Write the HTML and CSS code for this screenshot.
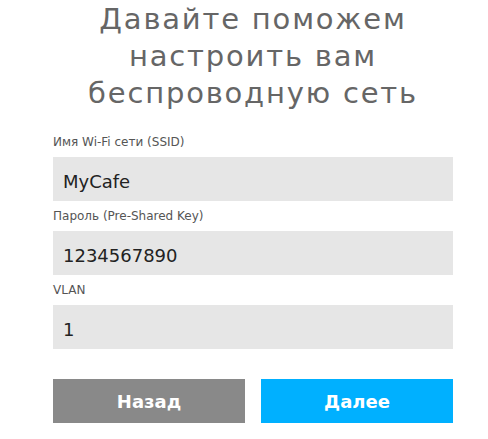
FILE: index.html
```html
<!DOCTYPE html>
<html lang="ru">
<head>
<meta charset="utf-8">
<link rel="stylesheet" href="styles.css">
</head>
<body>
<div class="wrap">
  <h1 class="title">Давайте поможем<br>настроить вам<br>беспроводную сеть</h1>
  <form class="form">
    <label class="field">
      <span class="label">Имя Wi-Fi сети (SSID)</span>
      <span class="input">MyCafe</span>
    </label>
    <label class="field">
      <span class="label">Пароль (Pre-Shared Key)</span>
      <span class="input">1234567890</span>
    </label>
    <label class="field">
      <span class="label">VLAN</span>
      <span class="input">1</span>
    </label>
    <div class="buttons">
      <button type="button" class="btn btn-back">Назад</button>
      <button type="button" class="btn btn-next">Далее</button>
    </div>
  </form>
</div>
</body>
</html>
```
FILE: styles.css
```css
html, body {
  margin: 0;
  padding: 0;
  background: #ffffff;
}
body {
  font-family: "DejaVu Sans", "Liberation Sans", sans-serif;
}
.wrap {
  width: 400px;
  margin-left: 53px;
}
.title {
  margin: 0;
  padding-top: 1px;
  font-weight: normal;
  font-size: 29px;
  line-height: 37px;
  color: #666666;
  text-align: center;
  letter-spacing: 1.8px;
  white-space: nowrap;
}
.form {
  display: flex;
  flex-direction: column;
  margin-top: 15px;
}
.field {
  display: flex;
  flex-direction: column;
}
.label {
  height: 30px;
  line-height: 30px;
  font-size: 12px;
  color: #555555;
}
.input {
  display: flex;
  align-items: center;
  height: 44px;
  padding: 5px 10px 0;
  box-sizing: border-box;
  background: #e6e6e6;
  font-size: 18px;
  color: #222222;
}
.buttons {
  display: flex;
  gap: 16px;
  margin-top: 30px;
}
.btn {
  flex: 1;
  height: 44px;
  border: 0;
  padding: 0;
  font-family: inherit;
  font-size: 18px;
  font-weight: bold;
  color: #ffffff;
  cursor: pointer;
}
.btn-back {
  background: #898989;
}
.btn-next {
  background: #00b0ff;
}
```
